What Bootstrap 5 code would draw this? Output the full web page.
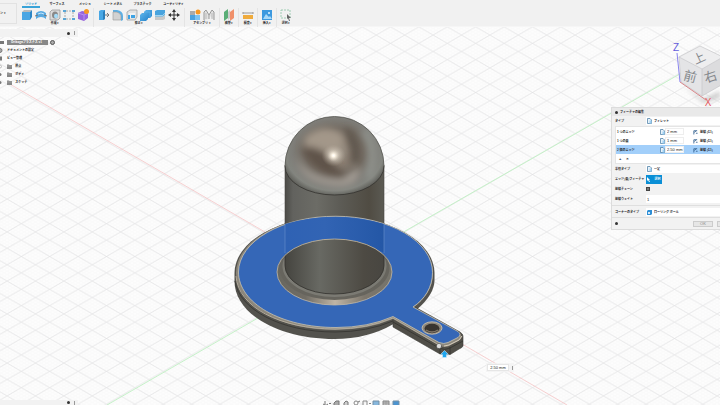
<!DOCTYPE html>
<html lang="ja">
<head>
<meta charset="utf-8">
<meta name="viewport" content="width=device-width, initial-scale=1">
<title>フィーチャの編集</title>
<link href="https://cdn.jsdelivr.net/npm/bootstrap@5.3.0/dist/css/bootstrap.min.css" rel="stylesheet">
<style>
body{font-family:"Noto Sans CJK JP","Liberation Sans",sans-serif;font-size:3px;line-height:4px;color:#222;background:#fcfcfc;font-weight:700}
button,input,select{font:inherit;color:inherit;border:0;border-radius:0;padding:0;margin:0;background:none}
select{appearance:none}
.ribbon{background:#f1f1f1;height:27px;border-bottom:1px solid #f6f6f6}
.workspace-pick{width:17px;height:21px;border:1px solid #e2e2e2;border-left:0}
.ribbon-tabs{height:8px;padding-left:5px}
.ribbon-tabs button{width:28px;padding-top:1px;border-bottom:2px solid transparent;white-space:nowrap}
.ribbon-tabs .wide-tab{width:31px}
.ribbon-tabs .current{width:18px;margin-right:3px;color:#0a8bd0;border-color:#38a3d8}
.tools{height:19px}
.tool-group{padding:0 3px;border-right:1px solid #e4e4e4}
.tool-group:last-child{border:0}
.tool-group button{width:14px;height:13px;display:block}
.tool-group svg{width:12px;height:12px;display:block;margin:auto}
.slim{padding:0 2px}
.latin{font-size:4px;font-family:"Liberation Sans",sans-serif;font-weight:400}
.scene{left:0;top:0;width:100%;height:100%;display:block}
.browser{left:0;top:2px;width:78px}
.bar-head{background:#f2f2f2;height:8px;padding-right:3px}
.dot{width:3px;height:3px;border-radius:50%;background:#333}
.grip{width:1px;height:4px;background:#999}
.tree{margin:1px 0 0;padding:0;list-style:none}
.tree li{height:8px;gap:2px}
.tree svg{width:5px;height:5px}
.doc{background:#888;color:#fff;height:5px;padding:0 4px;width:41px;line-height:5px;white-space:nowrap}
.dialog-box{right:0;top:80px;width:109px;background:#f2f2f2;border:1px solid #dcdcdc;border-right:0;overflow:hidden}
.dialog-title{height:8px;background:#e9e9e9;padding:0 3px;gap:2px}
.field-row{height:10px;padding-left:3px}
.field-row>label,.field-row>.cap{width:31px;flex:none;white-space:nowrap}
.field{background:#fff;height:8px;flex:1;padding-left:1px;gap:2px;min-width:0}
.field select,.field input{flex:1;min-width:0}
.mini{width:5px;height:6px;flex:none}
.sets{background:#fff;margin:0 0 0 3px;border:1px solid #e5e5e5;border-right:0}
.set-row{height:9px;padding-left:1px}
.set-row label{width:43px;flex:none}
.set-row input{width:19px;background:#fff;height:7px;border:1px solid #eee;flex:none;padding-left:1px}
.set-row.chosen{background:#a2cffa}
.set-row .cont{margin-left:9px;gap:2px;white-space:nowrap}
.set-tools{height:9px;gap:5px;padding-left:3px}
.pick{background:#0a8fd6!important;color:#fff!important;width:16px;height:9px}
.tick{appearance:none;width:4px;height:4px;background:#777!important;border:1px solid #444!important}
.rule{border-top:1px solid #dfdfdf}
.gap-rule{margin:1px 0}
.foot{height:12px;padding:0 3px}
.foot button{width:20px;height:6px;border:1px solid #ccc;background:#e6e6e6;color:#888}
.foot .cut{width:3px;border-right:0;margin-right:-3px}
.size-input{left:486px;top:336px;height:9px;gap:3px;padding:1px;background:#f2f2f2cc}
.size-input input{width:22px;background:#fff;text-align:center;height:7px;border:1px solid #e6e6e6}
.comments{left:0;bottom:0;width:78px;height:5px}
.viewbar{left:0;right:0;bottom:-2px;gap:1px;padding-left:3px}
.viewbar button{width:9px;height:7px}
.viewbar svg{width:9px;height:7px;display:block}
</style>
<script src="https://cdn.jsdelivr.net/npm/bootstrap@5.3.0/dist/js/bootstrap.bundle.min.js"></script>
</head>
<body class="vh-100 d-flex flex-column overflow-hidden">
<svg width="0" height="0" class="position-absolute" aria-hidden="true">
<defs>
<linearGradient id="blueFill" x2="1" y2="1"><stop stop-color="#68bdf0"/><stop offset="1" stop-color="#1c7cc6"/></linearGradient>
<symbol id="page" viewBox="0 0 5 6"><path d="M.5.5H3L4.5 2v3.5h-4z" fill="#e8f2fa" stroke="#5484a8" stroke-width=".8"/><path d="M2.5 2.5h2v3h-2z" fill="#9fd0f3"/></symbol>
<symbol id="cornerBox" viewBox="0 0 5 6"><path d="M0 2l1-1h4v4l-1 1H0z" fill="#2f8fd6"/><path d="M1 3h2v2H1z" fill="#cfe8fa"/></symbol>
<symbol id="curve" viewBox="0 0 6 6"><path d="M1 6V1.500h4M1.500 3.500L4 1.500M3.500 4.500h2" fill="none" stroke="#315f8e" stroke-width="1"/></symbol>
<symbol id="folder" viewBox="0 0 5 5"><path d="M0 .5h2l.5.5H5v4H0z" fill="#888"/><path d="M0 2h5" stroke="#bbb" stroke-width=".5"/></symbol>
</defs>
</svg>
<header class="ribbon d-flex flex-shrink-0">
<button class="workspace-pick align-self-center text-start flex-shrink-0" aria-label="デザイン">ン ▾</button>
<div class="flex-grow-1">
<nav class="ribbon-tabs d-flex" aria-label="リボン">
<button class="current">ソリッド</button><button>サーフェス</button><button>メッシュ</button><button>シート メタル</button><button class="wide-tab">プラスチック</button><button class="wide-tab">ユーティリティ</button>
</nav>
<div class="tools d-flex text-center">
<div class="tool-group"><div class="d-flex">
<button aria-label="押し出し"><svg viewBox="0 0 12 12"><path d="M1 3l2-2h8L9 3z" fill="#bbb"/><path d="M1 3h8v8H1z" fill="#4ba6e3"/><path d="M9 3l2-2v7L9 11z" fill="#2c86c6"/></svg></button>
<button aria-label="回転"><svg viewBox="0 0 12 12"><path d="M1 4Q6 0 11 4v6Q9 8 6 8T1 10z" fill="#58a9e0"/><path d="M3 5q3-2 6 0" fill="none" stroke="#c3e4f9"/><path d="M0 7l3-1M12 7L9 6" stroke="#777"/></svg></button>
<button aria-label="穴"><svg viewBox="0 0 12 12"><path d="M1 3l2-2h8v8l-2 2H1z" fill="#dadada" stroke="#999" stroke-width=".8"/><ellipse cx="6" cy="6" rx="3" ry="3.500" fill="#888"/><ellipse cx="7" cy="7" rx="2" ry="2.200" fill="#a4dcf8"/></svg></button>
<button aria-label="パターン"><svg viewBox="0 0 12 12"><path d="M3 2h6M2 3v6M3 10h6M10 3v5" stroke="#aaa" stroke-dasharray="2 1"/><path d="M0 1h3v2H0zM9 1h3v2H9zM0 9h3v2H0zM9 9h3v2H9z" fill="#5aa5d6"/></svg></button>
<button aria-label="フォーム"><svg viewBox="0 0 12 12"><path d="M1 4l4-2 6 1v6l-4 3-6-2z" fill="#9765dc"/><path d="M1 4l6 2v5M7 6l4-2" stroke="#b890f2" fill="none"/><circle cx="9.500" cy="2.500" r="2.500" fill="#f79821"/></svg></button>
</div>作成 ▾</div>
<div class="tool-group"><div class="d-flex">
<button aria-label="プレス／プル"><svg viewBox="0 0 12 12"><path d="M1 2l2-1h4v9l-2 1H1z" fill="#48a7e5"/><path d="M5 3l2-2v9l-2 1z" fill="#2a7fbc"/><path d="M7 6h4M9 4l2 2-2 2" stroke="#777" fill="none"/></svg></button>
<button aria-label="フィレット"><svg viewBox="0 0 12 12"><path d="M1 1h4q6 1 6 6v4L9 12V8Q9 4 4 3H1z" fill="#5dafe4"/><path d="M1 3h3q5 1 5 5v3H1z" fill="#d2d2d2" stroke="#999" stroke-width=".6"/></svg></button>
<button aria-label="シェル"><svg viewBox="0 0 12 12"><path d="M1 3l3-2h7v7l-2 3H1z" fill="#e2e2e2" stroke="#999" stroke-width=".7"/><path d="M3 4h6v5H3z" fill="#f2f2f2"/><path d="M5 6h4v3H5zM2 6h2v4H2z" fill="#3ea2e3"/></svg></button>
<button aria-label="結合"><svg viewBox="0 0 12 12"><path d="M4 3l2-2h6v6l-2 2H8v1l-2 2H0V6l2-2h2z" fill="url(#blueFill)"/><path d="M4 3h6v6" fill="none" stroke="#69b8eb" stroke-width=".6"/></svg></button>
<button aria-label="面をオフセット"><svg viewBox="0 0 12 12"><path d="M1 2l2-1h8v3L9 6H1z" fill="#48a3de"/><path d="M1 7h8l2-2v5l-2 1H1z" fill="#c8c8c8"/><path d="M1 7h8l2-2" stroke="#57b7ee" fill="none"/></svg></button>
<button aria-label="移動"><svg viewBox="0 0 12 12"><path d="M6 2v8M2 6h8" stroke="#333"/><path d="M6 0l2 3H4zM6 12l2-3H4zM0 6l3-2v4zM12 6L9 4v4z" fill="#333"/></svg></button>
</div>修正 ▾</div>
<div class="tool-group"><div class="d-flex">
<button aria-label="新規コンポーネント"><svg viewBox="0 0 12 12"><path d="M1 2h5v4H1z" fill="#aaa"/><path d="M1 6h5v5H1z" fill="#4aa1de"/><path d="M6 6h5v5H6z" fill="#7cc2f1"/><circle cx="9" cy="3" r="2.500" fill="#f79821"/></svg></button>
<button aria-label="ジョイント"><svg viewBox="0 0 12 12"><path d="M1 11V3l2-2 3 5v4M11 11V3L9 1 6 6" fill="#e2e2e2" stroke="#999"/><path d="M3 4v6M9 4v6" stroke="#bbb"/></svg></button>
</div>アセンブリ ▾</div>
<div class="tool-group slim"><button aria-label="平面" class="mx-auto"><svg viewBox="0 0 12 12"><path d="M1 3l4-3v9l-4 3z" fill="#5aae77"/><path d="M5 3l2-2v8l-2 2z" fill="#ccc"/><path d="M7 3l4-3v9l-4 3z" fill="#f0906a"/></svg></button>構築 ▾</div>
<div class="tool-group slim"><button aria-label="計測" class="mx-auto"><svg viewBox="0 0 12 12"><path d="M1 4h10M1 3v2M11 3v2" stroke="#999"/><path d="M1 6h10v4H1z" fill="#efab3d"/></svg></button>検査 ▾</div>
<div class="tool-group slim"><button aria-label="画像" class="mx-auto"><svg viewBox="0 0 12 12"><path d="M1 1h10v10H1z" fill="#3d99df"/><path d="M2 10l3-5 3 3 1-1 2 3z" fill="#a9d9f8"/><circle cx="8" cy="4" r="1" fill="#e4f6ff"/></svg></button>挿入 ▾</div>
<div class="tool-group slim"><button aria-label="選択" class="mx-auto"><svg viewBox="0 0 12 12"><path d="M1 1h9v8H1z" fill="none" stroke="#8cc4a5" stroke-dasharray="2 1" stroke-width=".8"/><path d="M7 5l4 4H9l1 3H9L8 9 7 10z" fill="#666"/></svg></button>選択 ▾</div>
</div>
</div>
</header>
<main class="position-relative flex-grow-1 overflow-hidden">
<svg class="scene position-absolute" viewBox="0 27 720 378" preserveAspectRatio="xMidYMid slice" role="img" aria-label="3D モデル">
<defs>
<pattern id="fine" width="5.680" height="3.280" patternUnits="userSpaceOnUse" patternTransform="translate(518.300 166.300)"><path d="M0 0L5.680 3.280M0 3.280L5.680 0" stroke="#f3f3f5" stroke-width=".4"/></pattern>
<pattern id="coarse" width="28.400" height="16.400" patternUnits="userSpaceOnUse" patternTransform="translate(518.300 166.300)"><path d="M0 0L28.400 16.400M0 16.400L28.400 0" stroke="#e0e0e2" stroke-width=".7"/></pattern>
<linearGradient id="post"><stop stop-color="#4c4b47"/><stop offset=".08" stop-color="#62625e"/><stop offset=".32" stop-color="#6c6c66"/><stop offset=".55" stop-color="#5d5c56"/><stop offset=".85" stop-color="#504c43"/><stop offset="1" stop-color="#5b5a53"/></linearGradient>
<linearGradient id="cup" x2="1"><stop stop-color="#45443f"/><stop offset=".35" stop-color="#686963"/><stop offset=".8" stop-color="#4d4a43"/><stop offset="1" stop-color="#484641"/></linearGradient>
<radialGradient id="dome" cx=".5" cy=".45" r=".57"><stop stop-color="#a49b8f"/><stop offset=".3" stop-color="#887c70"/><stop offset=".52" stop-color="#746c63"/><stop offset=".75" stop-color="#7e7d78"/><stop offset=".87" stop-color="#83857f"/><stop offset="1" stop-color="#5b5b56"/></radialGradient>
<radialGradient id="glint"><stop stop-color="#fff"/><stop offset=".25" stop-color="#fff7e8"/><stop offset="1" stop-color="#c2b7a8" stop-opacity="0"/></radialGradient>
<linearGradient id="shine"><stop stop-color="#68675f"/><stop offset=".25" stop-color="#716d65"/><stop offset=".5" stop-color="#c0b5a5"/><stop offset=".75" stop-color="#7c766c"/><stop offset="1" stop-color="#74736b"/></linearGradient>
<linearGradient id="blueBand"><stop stop-color="#2f62b4"/><stop offset=".4" stop-color="#3264b4"/><stop offset="1" stop-color="#2457a6"/></linearGradient>
<filter id="soft" x="-40%" y="-40%" width="180%" height="180%"><feGaussianBlur stdDeviation="3.500"/></filter>
<filter id="cast" x="-40%" y="-40%" width="180%" height="180%"><feGaussianBlur stdDeviation="2"/></filter>
<clipPath id="domeClip"><path d="M285 166a49.500 49.500 0 0 1 99 0A49.500 29 0 0 1 285 166"/></clipPath>
<clipPath id="holeClip"><ellipse cx="334.500" cy="272" rx="57.500" ry="33"/></clipPath>
</defs>
<path d="M0 27h720v378H0z" fill="#fdfdfd"/>
<path d="M0 27h720v378H0z" fill="url(#fine)"/>
<path d="M0 27h720v378H0z" fill="url(#coarse)"/>
<path d="M8 83L265 232M462 344L567 405" stroke="#f5c4c5" stroke-width=".8"/>
<path d="M692 67L400 234M258 318L107 405" stroke="#c0f0c3" stroke-width=".9"/>
<!-- flange side and handle side -->
<path d="M234.500 273a100 57 0 0 1 200 0v7q0 14-17 29l-24 15q-26 15-59 15c-56 0-100-25-100-58z" fill="#53524d"/>
<path d="M235 281c4 28 45 51 100 51q32 0 58-11" fill="none" stroke="#3b3a36"/>
<path d="M393 315l20-9 47 26q3 2 3 4v10q-1 2-4 3l-8 5q-6 2-11 0l-47-27z" fill="#504e48" stroke="#3b3a36" stroke-width=".6"/>
<path d="M393 322l46 26q6 3 11 0l13-7M440 346v8M450 347v8" fill="none" stroke="#34332f" stroke-width=".8"/>
<!-- bevel -->
<path d="M411 309c14-9 22-21 22-36a98.500 57 0 1 0-197 0c0 32 44 57 99 57q32 0 58-11l47 27q5 2 9 0l11-6q3-3 0-6z" fill="#8c877c"/>
<path d="M236 276c2 31 44 53 99 53q32 0 58-11l46 27" fill="none" stroke="#b3ab9c"/>
<!-- post above flange -->
<path d="M285 165h99v106h-99z" fill="url(#post)"/>
<path d="M285 165v70M384 165v70" stroke="#464540" stroke-width=".6"/>
<!-- selected face -->
<path d="M413 307c12-8 19.500-20 19.500-34.500A97 56 0 0 0 238.500 272C238.500 303 281 327.500 336 327.500q32 0 57-11l46 26q5 2 9 0l10-5q4-3 0-6z" fill="#3567b7" stroke="#c9c1ae" stroke-width=".8"/>
<path d="M285 224q49-14 99 0v29q-48-28-99 0z" fill="url(#blueBand)"/>
<path d="M285 224v29M384 224v29" stroke="#6990cc" stroke-width=".6"/>
<!-- groove and cup -->
<g clip-path="url(#holeClip)"><path d="M276 238h118v68H276z" fill="url(#shine)"/>
<ellipse cx="334.500" cy="268" rx="55" ry="32" fill="#66645d"/>
<ellipse cx="334.500" cy="266" rx="52" ry="31" fill="#7b7a73"/>
<path d="M285 235h99v30.500a49.500 28.500 0 0 1-99 0z" fill="url(#cup)" stroke="#32312d" stroke-width=".8"/></g>
<ellipse cx="334.500" cy="272" rx="57.500" ry="33" fill="none" stroke="#c3b9a6" stroke-width=".8"/>
<!-- dome -->
<path d="M285 166a49.500 49.500 0 0 1 99 0A49.500 29 0 0 1 285 166" fill="url(#dome)"/>
<g clip-path="url(#domeClip)"><g filter="url(#soft)"><path d="M305 137q20-17 40 0l-8 18q-17-9-33-3z" fill="#a39789"/><path d="M302 147q18-3 30 15t27 10q-12 11-32 3-21-10-25-28" fill="#5e534a"/><path d="M348 128q18 14 11 36l-9-2q4-18-9-30z" fill="#5f564e"/><path d="M296 157q12 23 46 22l18-12q0 20-23 19-36-2-41-29" fill="#a39c94"/><path d="M364 130q15 20 4 48" stroke="#8f928c" stroke-width="8" fill="none"/></g>
<ellipse cx="333.500" cy="155.500" rx="12" ry="11" fill="url(#glint)" opacity=".6"/><circle cx="333.500" cy="155.500" r="6" fill="url(#glint)"/></g>
<path d="M285 166a49.500 49.500 0 0 1 99 0" fill="none" stroke="#555550" stroke-width=".8"/>
<path d="M285 166A49.500 29 0 0 0 384 166" fill="none" stroke="#33322e" stroke-width=".8"/>
<!-- handle hole -->
<ellipse cx="432" cy="328" rx="10" ry="6.200" fill="#8e877b" stroke="#d0c5b1" stroke-width=".8"/><ellipse cx="432" cy="328.500" rx="7.500" ry="4.700" fill="#39342f"/><path d="M426 330q6 4 12 0" stroke="#817769" stroke-width="1.500" fill="none"/>
<path d="M444 346l5-1 10-5 3-4" fill="none" stroke="#d6cdbc"/>
<circle cx="439" cy="346" r="2.500" fill="#ddd" stroke="#444" stroke-dasharray="1 1"/>
<path d="M444.500 350.500l4 4h-2v3h-4v-3h-2z" fill="#20a6ef" stroke="#e4f7ff" stroke-width=".5"/>
<!-- view cube -->
<path d="M682 85l21 14 17-8v7l-17 5z" fill="#aaa" opacity=".55" filter="url(#cast)"/>
<path d="M679 57l21-11 23 11-21 12z" fill="#eeeeef"/><path d="M679 57l23 12v27l-21-14z" fill="#e4e4e6"/><path d="M702 69l21-12v27l-21 12z" fill="#dcdcde"/>
<path d="M679 57l23 12 21-12M702 69v27M679 57l21-11 23 11M679 57l2 25 21 14 21-12" fill="none" stroke="#c6c6c9" stroke-width=".7"/>
<path d="M677 53l3 29" stroke="#8984ee"/><path d="M680 82l26 18" stroke="#d98589"/>
<g font-family="Noto Sans CJK JP, sans-serif" font-weight="400" fill="#85888c" text-anchor="middle"><text transform="translate(701 62) rotate(-25)" font-size="12">上</text><text transform="translate(689 81) rotate(14)" font-size="13">前</text><text transform="translate(712 81) rotate(-18)" font-size="13">右</text></g>
<g font-family="Liberation Sans, sans-serif" font-weight="400" font-size="10" text-anchor="middle"><text x="676" y="51" fill="#635cdc">Z</text><text x="708" y="106" fill="#e65c62">X</text></g>
</svg>
<aside class="browser position-absolute">
<div class="bar-head d-flex align-items-center justify-content-end gap-1"><span class="dot"></span><span class="grip"></span></div>
<ul class="tree">
<li class="d-flex align-items-center"><svg viewBox="0 0 5 5"><path d="M0 1h4v3H0z" fill="#777"/></svg><span class="doc">Oribagoプラスチス v1</span><svg viewBox="0 0 5 5"><circle cx="2.500" cy="2.500" r="2" fill="#aaa" stroke="#555"/></svg></li>
<li class="d-flex align-items-center"><svg viewBox="0 0 5 5"><circle cx="0" cy="2.500" r="2" fill="#aaa" stroke="#777"/></svg>ドキュメントの設定</li>
<li class="d-flex align-items-center"><svg viewBox="0 0 5 5"><path d="M0 .5h2v4H0z" fill="#777"/></svg>ビュー管理</li>
<li class="d-flex align-items-center"><svg viewBox="0 0 5 5"><circle cx="0" cy="2.500" r="1.500" fill="none" stroke="#999" stroke-width=".6"/></svg><svg><use href="#folder"/></svg>&nbsp;&nbsp;原点</li>
<li class="d-flex align-items-center"><svg viewBox="0 0 5 5"><circle cx="0" cy="2.500" r="1.500" fill="#777"/></svg><svg><use href="#folder"/></svg>&nbsp;&nbsp;ボディ</li>
<li class="d-flex align-items-center"><svg viewBox="0 0 5 5"><circle cx="0" cy="2.500" r="1.500" fill="#777"/></svg><svg><use href="#folder"/></svg>&nbsp;&nbsp;スケッチ</li>
</ul>
</aside>
<section class="dialog-box position-absolute" aria-label="フィーチャの編集">
<div class="dialog-title d-flex align-items-center"><span class="dot"></span>フィーチャの編集</div>
<div class="field-row d-flex align-items-center"><label for="kind">タイプ</label><div class="field d-flex align-items-center"><svg class="mini"><use href="#page"/></svg><select id="kind"><option>フィレット</option></select></div></div>
<div class="sets">
<div class="set-row d-flex align-items-center"><label for="r1">1 つのエッジ</label><svg class="mini"><use href="#page"/></svg><input id="r1" class="latin" value="2 mm"><span class="cont d-flex align-items-center"><svg class="mini"><use href="#curve"/></svg>接線 (G1)</span></div>
<div class="set-row d-flex align-items-center"><label for="r2">1 つの面</label><svg class="mini"><use href="#page"/></svg><input id="r2" class="latin" value="1 mm"><span class="cont d-flex align-items-center"><svg class="mini"><use href="#curve"/></svg>接線 (G1)</span></div>
<div class="set-row chosen d-flex align-items-center"><label for="r3">2 個のエッジ</label><svg class="mini"><use href="#page"/></svg><input id="r3" class="latin" value="2.50 mm"><span class="cont d-flex align-items-center"><svg class="mini"><use href="#curve"/></svg>接線 (G1)</span></div>
<div class="set-tools d-flex align-items-center latin"><button class="fw-bold" aria-label="追加">+</button><button class="fw-bold" aria-label="削除">×</button></div>
</div>
<div class="field-row d-flex align-items-center"><label for="rad">半径タイプ</label><div class="field d-flex align-items-center"><svg class="mini"><use href="#page"/></svg><select id="rad"><option>一定</option></select></div></div>
<div class="field-row d-flex align-items-center"><span class="cap">エッジ/面/フィーチャ</span><button class="pick d-flex align-items-center justify-content-center gap-1"><svg width="3" height="5" viewBox="0 0 3 5"><path d="M0 0l3 3H2l1 2H2L1 3 0 4z" fill="#fff"/></svg>選択</button></div>
<div class="field-row d-flex align-items-center"><label for="chain">接線チェーン</label><input id="chain" class="tick ms-0" type="checkbox" checked></div>
<div class="field-row d-flex align-items-center"><label for="weight">接線ウェイト</label><div class="field d-flex align-items-center"><input id="weight" class="latin" value="1"></div></div>
<div class="rule gap-rule"></div>
<div class="field-row d-flex align-items-center"><label for="corner">コーナーのタイプ</label><div class="field d-flex align-items-center"><svg class="mini"><use href="#cornerBox"/></svg><select id="corner"><option>ローリング ボール</option></select></div></div>
<div class="rule foot d-flex align-items-center"><span class="dot"></span><button class="latin ms-auto me-1">OK</button><button class="cut" aria-label="キャンセル"></button></div>
</section>
<div class="size-input position-absolute d-flex align-items-center"><input class="latin" aria-label="半径" value="2.50 mm"><span class="grip"></span></div>
<div class="comments bar-head position-absolute d-flex align-items-center justify-content-end gap-1"><span class="dot"></span><span class="grip"></span></div>
<div class="viewbar position-absolute d-flex justify-content-center">
<button aria-label="オービット"><svg viewBox="0 0 9 7"><path d="M3 1v5M1 4q3 3 5 0M7 3l1 1 1-1" fill="none" stroke="#777"/></svg></button>
<button aria-label="ビュー正面"><svg viewBox="0 0 9 7"><path d="M2 3l2-2h3v5H2z" fill="#aaa" stroke="#777"/></svg></button>
<button aria-label="画面移動"><svg viewBox="0 0 9 7"><path d="M2 6V3l2-2 2 1v4z" fill="#ccc" stroke="#777"/></svg></button>
<button aria-label="ズーム"><svg viewBox="0 0 9 7"><circle cx="4" cy="3" r="2" fill="none" stroke="#888"/><path d="M6 2l2-1M3 6h2" stroke="#777"/></svg></button>
<button aria-label="フィット"><svg viewBox="0 0 9 7"><path d="M1 1h4v5H1zM7 3l1 1 1-1" fill="none" stroke="#888"/></svg></button>
<button aria-label="表示設定"><svg viewBox="0 0 9 7"><path d="M1 1h6v5H1z" fill="#87b7dc" stroke="#7590a6"/></svg></button>
<button aria-label="グリッド"><svg viewBox="0 0 9 7"><path d="M1 1h6v5H1z" fill="#bbb" stroke="#888"/><path d="M1 3h6M4 1v5" stroke="#888" stroke-width=".5"/></svg></button>
<button aria-label="ビューポート"><svg viewBox="0 0 9 7"><path d="M1 1h6v5H1z" fill="#4c94d0" stroke="#7590a6"/></svg></button>
</div>
</main>
</body>
</html>
